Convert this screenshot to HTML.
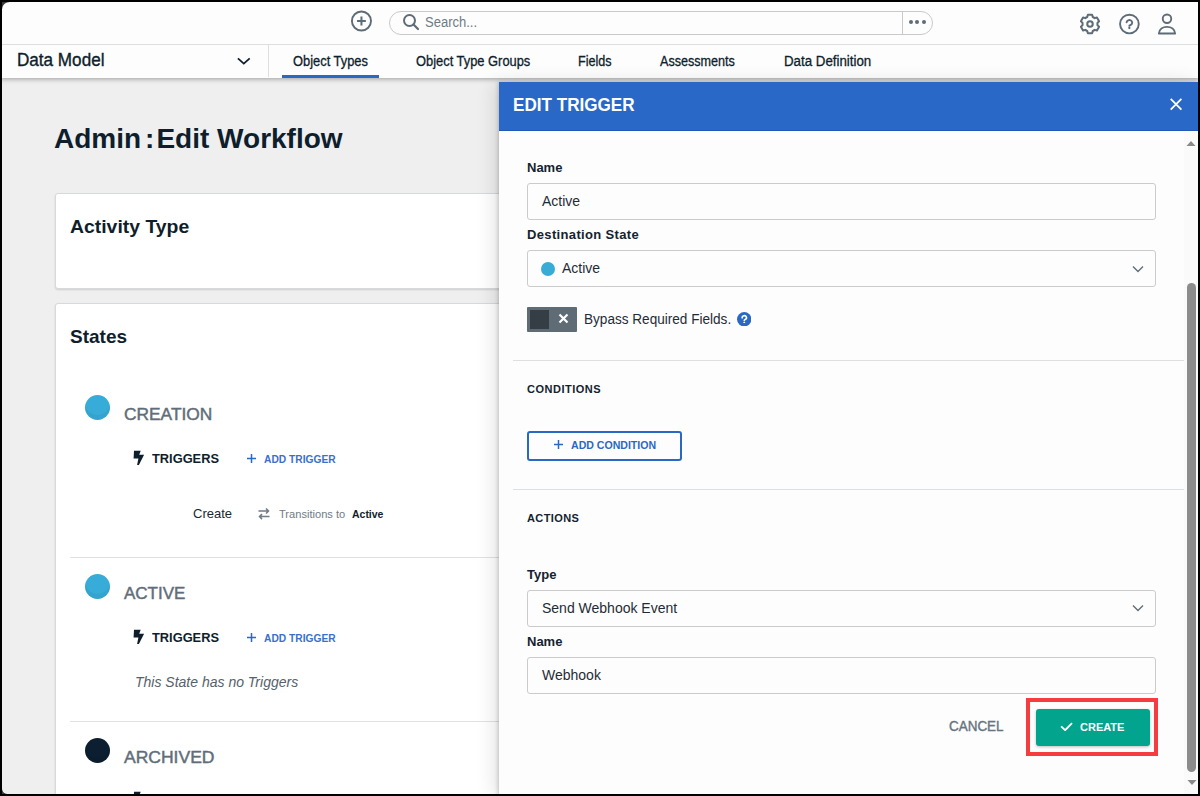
<!DOCTYPE html><html><head><meta charset="utf-8"><style>
html,body{margin:0;padding:0;width:1200px;height:796px;overflow:hidden;background:#000;}
body{position:relative;font-family:"Liberation Sans", sans-serif;}
.a{position:absolute;box-sizing:border-box;}
.t{position:absolute;white-space:pre;}
</style></head><body>
<div class="a" style="left:0;top:0;width:1200px;height:796px;background:#efefef;"></div>
<div class="t" style="left:54px;top:125.30px;font-size:28px;line-height:28px;color:#0e1e2c;font-weight:bold;font-style:normal;">Admin<span style="display:inline-block;width:4px"></span>:<span style="display:inline-block;width:2px"></span>Edit Workflow</div>
<div class="a" style="left:55px;top:193px;width:700px;height:96px;background:#fff;border:1px solid #d6dadd;border-radius:3px;box-shadow:0 1px 2px rgba(0,0,0,0.14);"></div>
<div class="t" style="left:70px;top:216.92px;font-size:19px;line-height:19px;color:#0e1e2c;font-weight:bold;font-style:normal;transform:scaleX(1.02);transform-origin:0 0;">Activity Type</div>
<div class="a" style="left:55px;top:303px;width:700px;height:600px;background:#fff;border:1px solid #d6dadd;border-radius:3px;box-shadow:0 1px 2px rgba(0,0,0,0.14);"></div>
<div class="t" style="left:70px;top:326.92px;font-size:19px;line-height:19px;color:#0e1e2c;font-weight:bold;font-style:normal;">States</div>
<div class="a" style="left:85px;top:394.5px;width:25px;height:25px;border-radius:50%;background:#37acd8;box-shadow:inset 0 -5px 0 rgba(0,0,0,0.05);"></div>
<div class="t" style="left:124px;top:406.11px;font-size:17px;line-height:17px;color:#5f6d79;font-weight:normal;font-style:normal;transform:scaleX(1.02);transform-origin:0 0;-webkit-text-stroke:0.45px #5f6d79;">CREATION</div>
<div class="a" style="left:85px;top:573.5px;width:25px;height:25px;border-radius:50%;background:#37acd8;box-shadow:inset 0 -5px 0 rgba(0,0,0,0.05);"></div>
<div class="t" style="left:124px;top:585.11px;font-size:17px;line-height:17px;color:#5f6d79;font-weight:normal;font-style:normal;-webkit-text-stroke:0.45px #5f6d79;">ACTIVE</div>
<div class="a" style="left:85px;top:737.5px;width:25px;height:25px;border-radius:50%;background:#0c1f30;box-shadow:inset 0 -5px 0 rgba(0,0,0,0.05);"></div>
<div class="t" style="left:124px;top:749.11px;font-size:17px;line-height:17px;color:#5f6d79;font-weight:normal;font-style:normal;transform:scaleX(1.03);transform-origin:0 0;-webkit-text-stroke:0.45px #5f6d79;">ARCHIVED</div>
<svg class="a" style="left:128px;top:446px" width="24" height="24" viewBox="0 0 24 24"><path d="M6 4.7L12.7 4.7L11.2 8.7L16.1 8.7L10.9 18.9L9.1 18.9L10.4 12.6L5.6 12.6Z" fill="#0e1e2c"/></svg>
<div class="t" style="left:152px;top:451.57px;font-size:13.5px;line-height:13.5px;color:#0e1e2c;font-weight:bold;font-style:normal;transform:scaleX(0.95);transform-origin:0 0;">TRIGGERS</div>
<svg class="a" style="left:247px;top:454px" width="9" height="9" viewBox="0 0 9 9"><path d="M4.5 0V9M0 4.5H9" stroke="#2a68c6" stroke-width="1.5"/></svg>
<div class="t" style="left:264px;top:453.69px;font-size:11px;line-height:11px;color:#3a70cc;font-weight:bold;font-style:normal;transform:scaleX(0.93);transform-origin:0 0;">ADD TRIGGER</div>
<div class="t" style="left:193px;top:506.50px;font-size:13px;line-height:13px;color:#1a2733;font-weight:normal;font-style:normal;">Create</div>
<svg class="a" style="left:258px;top:508px" width="12" height="12" viewBox="0 0 12 12"><path d="M0.5 3H10.5M8 0.5L10.5 3L8 5.5M11.5 8.6H1.5M4 6.1L1.5 8.6L4 11.1" stroke="#6f7b85" stroke-width="1.5" fill="none"/></svg>
<div class="t" style="left:279px;top:509.07px;font-size:11.5px;line-height:11.5px;color:#6f7b85;font-weight:normal;font-style:normal;transform:scaleX(0.965);transform-origin:0 0;">Transitions to</div>
<div class="t" style="left:352px;top:509.07px;font-size:11.5px;line-height:11.5px;color:#0e1e2c;font-weight:bold;font-style:normal;transform:scaleX(0.91);transform-origin:0 0;">Active</div>
<div class="a" style="left:70px;top:557px;width:440px;height:1px;background:#e1e1e1;"></div>
<svg class="a" style="left:128px;top:625px" width="24" height="24" viewBox="0 0 24 24"><path d="M6 4.7L12.7 4.7L11.2 8.7L16.1 8.7L10.9 18.9L9.1 18.9L10.4 12.6L5.6 12.6Z" fill="#0e1e2c"/></svg>
<div class="t" style="left:152px;top:630.57px;font-size:13.5px;line-height:13.5px;color:#0e1e2c;font-weight:bold;font-style:normal;transform:scaleX(0.95);transform-origin:0 0;">TRIGGERS</div>
<svg class="a" style="left:247px;top:633px" width="9" height="9" viewBox="0 0 9 9"><path d="M4.5 0V9M0 4.5H9" stroke="#2a68c6" stroke-width="1.5"/></svg>
<div class="t" style="left:264px;top:632.69px;font-size:11px;line-height:11px;color:#3a70cc;font-weight:bold;font-style:normal;transform:scaleX(0.93);transform-origin:0 0;">ADD TRIGGER</div>
<div class="t" style="left:135px;top:675.15px;font-size:14px;line-height:14px;color:#56616b;font-weight:normal;font-style:italic;">This State has no Triggers</div>
<div class="a" style="left:70px;top:721px;width:440px;height:1px;background:#e1e1e1;"></div>
<svg class="a" style="left:128px;top:787px" width="24" height="24" viewBox="0 0 24 24"><path d="M6 4.7L12.7 4.7L11.2 8.7L16.1 8.7L10.9 18.9L9.1 18.9L10.4 12.6L5.6 12.6Z" fill="#0e1e2c"/></svg>
<div class="a" style="left:0;top:0;width:1200px;height:78px;background:#fdfdfd;box-shadow:0 1px 5px rgba(0,0,0,0.35);"></div>
<div class="a" style="left:0;top:44px;width:1200px;height:1px;background:#dcdfe2;"></div>
<div class="a" style="left:268px;top:45px;width:1px;height:32px;background:#dcdfe2;"></div>
<svg class="a" style="left:350px;top:10px" width="23" height="23" viewBox="0 0 23 23"><circle cx="11.45" cy="11" r="9.55" stroke="#5d6c78" stroke-width="1.9" fill="none"/><path d="M11.45 6.6V15.4M7.05 11H15.85" stroke="#5d6c78" stroke-width="2"/></svg>
<div class="a" style="left:389px;top:11px;width:544px;height:24px;border:1px solid #c9c9c9;border-radius:12px;background:#fdfdfd;"></div>
<div class="a" style="left:902px;top:12px;width:1px;height:22px;background:#c9c9c9;"></div>
<svg class="a" style="left:402px;top:13px" width="18" height="18" viewBox="0 0 18 18"><circle cx="7.5" cy="7.5" r="5.5" stroke="#5d6c78" stroke-width="2" fill="none"/><path d="M11.5 11.5L16 16" stroke="#5d6c78" stroke-width="2.2" stroke-linecap="round"/></svg>
<div class="t" style="left:425px;top:15.15px;font-size:14px;line-height:14px;color:#6e7b86;font-weight:normal;font-style:normal;transform:scaleX(0.93);transform-origin:0 0;">Search...</div>
<div class="a" style="left:908.7px;top:20px;width:4px;height:4px;border-radius:50%;background:#5d6c78;"></div>
<div class="a" style="left:915.2px;top:20px;width:4px;height:4px;border-radius:50%;background:#5d6c78;"></div>
<div class="a" style="left:921.7px;top:20px;width:4px;height:4px;border-radius:50%;background:#5d6c78;"></div>
<svg class="a" style="left:1076.25px;top:9.8px" width="28" height="28" viewBox="0 0 28 28"><path fill="none" stroke="#5d6c78" stroke-width="2" stroke-linejoin="round" d="M11.25 7.02L11.86 4.74L16.14 4.74L16.75 7.02A7.5 7.5 0 0 1 18.67 8.13L20.95 7.52L23.08 11.22L21.42 12.89A7.5 7.5 0 0 1 21.42 15.11L23.08 16.78L20.95 20.48L18.67 19.87A7.5 7.5 0 0 1 16.75 20.98L16.14 23.26L11.86 23.26L11.25 20.98A7.5 7.5 0 0 1 9.33 19.87L7.05 20.48L4.92 16.78L6.58 15.11A7.5 7.5 0 0 1 6.58 12.89L4.92 11.22L7.05 7.52L9.33 8.13A7.5 7.5 0 0 1 11.25 7.02Z"/><circle cx="14" cy="14" r="2.75" fill="none" stroke="#5d6c78" stroke-width="2"/></svg>
<svg class="a" style="left:1118px;top:13px" width="23" height="23" viewBox="0 0 23 23"><circle cx="11.4" cy="11.05" r="9.35" stroke="#5d6c78" stroke-width="1.9" fill="none"/><path d="M8.6 9.3A2.8 2.55 0 1 1 12.8 11.8L11.4 12.55V12.9" stroke="#5d6c78" stroke-width="1.9" fill="none" stroke-linecap="round" stroke-linejoin="round"/><circle cx="11.35" cy="15.0" r="1.15" fill="#5d6c78"/></svg>
<svg class="a" style="left:1156px;top:13px" width="22" height="23" viewBox="0 0 22 23"><circle cx="11" cy="5.7" r="4.25" stroke="#5d6c78" stroke-width="1.9" fill="none"/><path d="M2.9 20.5C3.3 16.3 6.8 13.9 11 13.9S18.7 16.3 19.1 20.5Z" stroke="#5d6c78" stroke-width="1.9" fill="none" stroke-linejoin="round"/></svg>
<div class="t" style="left:17px;top:50.76px;font-size:18px;line-height:18px;color:#0e1e2c;font-weight:normal;font-style:normal;transform:scaleX(0.95);transform-origin:0 0;-webkit-text-stroke:0.35px #0e1e2c;">Data Model</div>
<svg class="a" style="left:236px;top:56px" width="15" height="10" viewBox="0 0 15 10"><path d="M1.9 2.3L7.8 7.6L13.7 2.3" stroke="#0e1e2c" stroke-width="1.75" fill="none"/></svg>
<div class="t" style="left:293px;top:54.15px;font-size:14px;line-height:14px;color:#0e1e2c;font-weight:normal;font-style:normal;transform:scaleX(0.92);transform-origin:0 0;-webkit-text-stroke:0.3px #0e1e2c;">Object Types</div>
<div class="a" style="left:282px;top:75px;width:97px;height:3px;background:#2a68c6;"></div>
<div class="t" style="left:416px;top:54.15px;font-size:14px;line-height:14px;color:#0e1e2c;font-weight:normal;font-style:normal;transform:scaleX(0.92);transform-origin:0 0;-webkit-text-stroke:0.3px #0e1e2c;">Object Type Groups</div>
<div class="t" style="left:578px;top:54.15px;font-size:14px;line-height:14px;color:#0e1e2c;font-weight:normal;font-style:normal;transform:scaleX(0.9);transform-origin:0 0;-webkit-text-stroke:0.3px #0e1e2c;">Fields</div>
<div class="t" style="left:660px;top:54.15px;font-size:14px;line-height:14px;color:#0e1e2c;font-weight:normal;font-style:normal;transform:scaleX(0.9);transform-origin:0 0;-webkit-text-stroke:0.3px #0e1e2c;">Assessments</div>
<div class="t" style="left:784px;top:54.15px;font-size:14px;line-height:14px;color:#0e1e2c;font-weight:normal;font-style:normal;transform:scaleX(0.95);transform-origin:0 0;-webkit-text-stroke:0.3px #0e1e2c;">Data Definition</div>
<div class="a" style="left:499px;top:82px;width:699px;height:714px;background:#fdfdfd;box-shadow:-1px 0 4px rgba(0,0,0,0.19), -5px 0 18px rgba(0,0,0,0.11);"></div>
<div class="a" style="left:499px;top:82px;width:699px;height:49px;background:#2968c7;border-bottom:1px solid #1f5bb5;"></div>
<div class="t" style="left:513px;top:95.76px;font-size:18px;line-height:18px;color:#ffffff;font-weight:bold;font-style:normal;transform:scaleX(0.95);transform-origin:0 0;">EDIT TRIGGER</div>
<svg class="a" style="left:1169px;top:97px" width="14" height="14" viewBox="0 0 14 14"><path d="M1.7 1.9L12.4 12.6M12.4 1.9L1.7 12.6" stroke="#fff" stroke-width="1.8"/></svg>
<div class="a" style="left:1184px;top:131px;width:14px;height:663px;background:#fafafa;"></div>
<svg class="a" style="left:1186px;top:140px" width="10" height="7" viewBox="0 0 10 7"><path d="M0.5 6L5 1L9.5 6Z" fill="#8a8a8a"/></svg>
<div class="a" style="left:1187px;top:283px;width:9px;height:489px;border-radius:5px;background:#8c8c8c;"></div>
<svg class="a" style="left:1186.5px;top:779px" width="10" height="7" viewBox="0 0 10 7"><path d="M0.5 1L5 6L9.5 1Z" fill="#8a8a8a"/></svg>
<div class="t" style="left:527px;top:161.00px;font-size:13px;line-height:13px;color:#14232f;font-weight:bold;font-style:normal;">Name</div>
<div class="a" style="left:527px;top:183px;width:629px;height:37px;border:1px solid #cbcbcb;border-radius:3px;background:#fdfdfd;"></div>
<div class="t" style="left:542px;top:194.15px;font-size:14px;line-height:14px;color:#1f2c37;font-weight:normal;font-style:normal;">Active</div>
<div class="t" style="left:527px;top:228.00px;font-size:13px;line-height:13px;color:#14232f;font-weight:bold;font-style:normal;letter-spacing:0.35px;">Destination State</div>
<div class="a" style="left:527px;top:250px;width:629px;height:37px;border:1px solid #cbcbcb;border-radius:3px;background:#fdfdfd;"></div>
<div class="a" style="left:541px;top:262px;width:14px;height:14px;border-radius:50%;background:#38acd6;"></div>
<div class="t" style="left:562px;top:261.15px;font-size:14px;line-height:14px;color:#1f2c37;font-weight:normal;font-style:normal;">Active</div>
<svg class="a" style="left:1131.75px;top:264.7px" width="12" height="8" viewBox="0 0 12 8"><path d="M1 1.5L6 6.5L11 1.5" stroke="#5f6e7a" stroke-width="1.4" fill="none"/></svg>
<div class="a" style="left:527px;top:307px;width:50px;height:25px;background:#5f6b75;border-radius:1px;"></div>
<div class="a" style="left:530px;top:310px;width:19px;height:19px;background:#353d45;"></div>
<svg class="a" style="left:558px;top:313px" width="11" height="11" viewBox="0 0 11 11"><path d="M1.5 1.5L9.5 9.5M9.5 1.5L1.5 9.5" stroke="#fff" stroke-width="2.2"/></svg>
<div class="t" style="left:584px;top:312.15px;font-size:14px;line-height:14px;color:#1f2c37;font-weight:normal;font-style:normal;transform:scaleX(0.97);transform-origin:0 0;">Bypass Required Fields.</div>
<svg class="a" style="left:736.5px;top:311.5px" width="14.5" height="14.5" viewBox="0 0 14.5 14.5"><circle cx="7.25" cy="7.25" r="7.2" fill="#2a68c6"/><path d="M5.2 5.9A2.15 1.95 0 1 1 8.3 7.4C7.6 7.8 7.25 8 7.25 8.4" stroke="#fff" stroke-width="1.6" fill="none" stroke-linecap="round"/><rect x="6.3" y="9.7" width="1.9" height="1.2" rx="0.5" fill="#fff"/></svg>
<div class="a" style="left:513px;top:360px;width:671px;height:1px;background:#dde0e3;"></div>
<div class="t" style="left:527px;top:383.69px;font-size:11px;line-height:11px;color:#14232f;font-weight:bold;font-style:normal;letter-spacing:0.5px;">CONDITIONS</div>
<div class="a" style="left:527px;top:431px;width:155px;height:30px;border:2px solid #2a68c6;border-radius:3px;"></div>
<svg class="a" style="left:554px;top:440px" width="9" height="9" viewBox="0 0 9 9"><path d="M4.5 0V9M0 4.5H9" stroke="#2a68c6" stroke-width="1.5"/></svg>
<div class="t" style="left:571px;top:439.69px;font-size:11px;line-height:11px;color:#2a68c6;font-weight:bold;font-style:normal;transform:scaleX(0.96);transform-origin:0 0;">ADD CONDITION</div>
<div class="a" style="left:513px;top:489px;width:671px;height:1px;background:#dde0e3;"></div>
<div class="t" style="left:527px;top:512.69px;font-size:11px;line-height:11px;color:#14232f;font-weight:bold;font-style:normal;letter-spacing:0.4px;">ACTIONS</div>
<div class="t" style="left:527px;top:568.00px;font-size:13px;line-height:13px;color:#14232f;font-weight:bold;font-style:normal;">Type</div>
<div class="a" style="left:527px;top:590px;width:629px;height:37px;border:1px solid #cbcbcb;border-radius:3px;background:#fdfdfd;"></div>
<div class="t" style="left:542px;top:601.15px;font-size:14px;line-height:14px;color:#1f2c37;font-weight:normal;font-style:normal;">Send Webhook Event</div>
<svg class="a" style="left:1131.75px;top:603.7px" width="12" height="8" viewBox="0 0 12 8"><path d="M1 1.5L6 6.5L11 1.5" stroke="#5f6e7a" stroke-width="1.4" fill="none"/></svg>
<div class="t" style="left:527px;top:635.00px;font-size:13px;line-height:13px;color:#14232f;font-weight:bold;font-style:normal;">Name</div>
<div class="a" style="left:527px;top:657px;width:629px;height:37px;border:1px solid #cbcbcb;border-radius:3px;background:#fdfdfd;"></div>
<div class="t" style="left:542px;top:668.15px;font-size:14px;line-height:14px;color:#1f2c37;font-weight:normal;font-style:normal;">Webhook</div>
<div class="t" style="left:949px;top:719.15px;font-size:14px;line-height:14px;color:#66747f;font-weight:normal;font-style:normal;transform:scaleX(0.96);transform-origin:0 0;-webkit-text-stroke:0.4px #66747f;">CANCEL</div>
<div class="a" style="left:1026px;top:698px;width:132px;height:58px;border:4px solid #f73c3f;"></div>
<div class="a" style="left:1036px;top:709px;width:114px;height:37px;background:#02a48e;border-radius:3px;box-shadow:0 1px 3px rgba(0,0,0,0.25);"></div>
<svg class="a" style="left:1060px;top:721px" width="13" height="10" viewBox="0 0 13 10"><path d="M1.1 5.4L5.2 9.1L12 2.2" stroke="#fff" stroke-width="1.9" fill="none"/></svg>
<div class="t" style="left:1080px;top:721.69px;font-size:11px;line-height:11px;color:#ffffff;font-weight:bold;font-style:normal;">CREATE</div>
<div class="a" style="left:2px;top:2px;width:1196px;height:792px;box-shadow:0 0 0 30px #000;pointer-events:none;"></div>
<div class="a" style="left:2px;top:2px;width:7px;height:7px;background:radial-gradient(circle at 7px 7px, rgba(58,58,58,0) 6.3px, #3a3a3a 7.2px);"></div>
<div class="a" style="left:2px;top:789px;width:5px;height:5px;background:radial-gradient(circle at 5px 0px, rgba(58,58,58,0) 4.4px, #3a3a3a 5.2px);"></div>
</body></html>
